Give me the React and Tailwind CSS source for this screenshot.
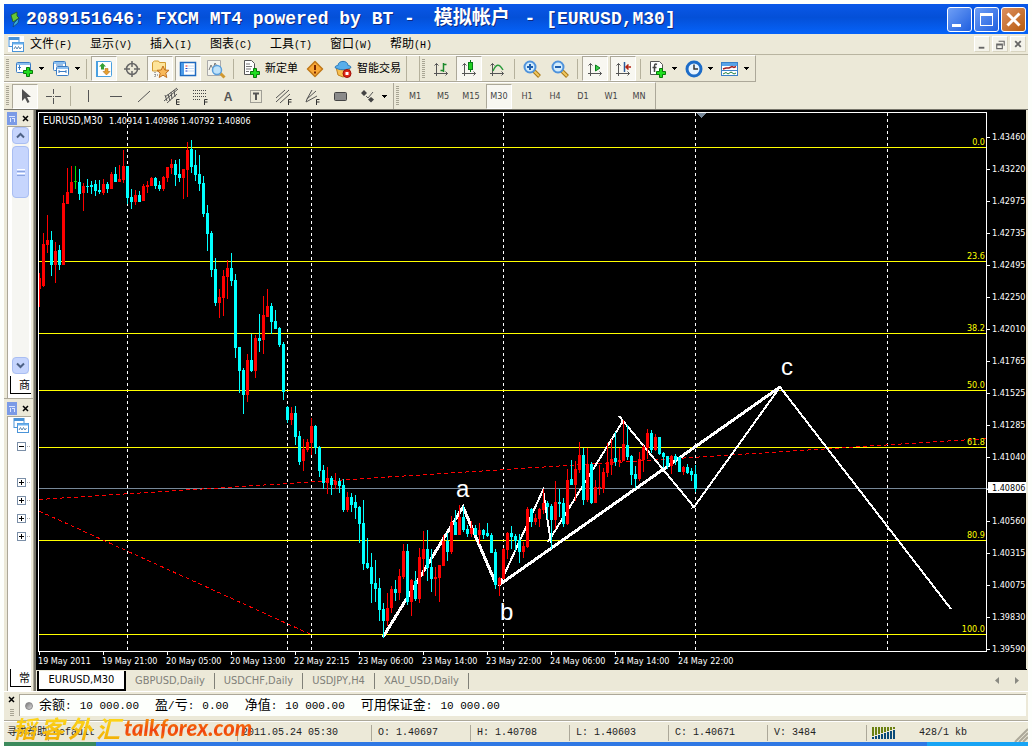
import React from "react";

/* ---------- chart data: [high, top, bottom, low, colour] per bar ---------- */
const BARS = [
  [273,278,289,307,"r"],[233,244,286,287,"r"],[215,240,245,253,"r"],[231,240,265,276,"c"],[242,251,265,283,"r"],
  [245,250,265,270,"c"],[195,203,265,265,"r"],[168,192,204,204,"r"],[166,182,193,193,"r"],[166,181,182,189,"g"],
  [169,182,194,200,"c"],[183,186,193,211,"r"],[179,186,187,193,"c"],[181,185,187,194,"c"],[180,184,191,196,"c"],
  [180,190,192,194,"c"],[179,184,193,195,"r"],[182,184,189,193,"c"],[172,174,189,189,"r"],[167,174,182,182,"c"],
  [165,179,182,182,"r"],[150,166,180,183,"r"],[166,166,198,204,"c"],[189,197,202,209,"c"],[190,195,202,205,"r"],
  [191,195,202,202,"c"],[184,186,201,201,"r"],[181,185,187,193,"r"],[177,178,186,186,"r"],[177,178,186,189,"c"],
  [181,185,189,191,"c"],[176,177,189,191,"r"],[167,167,178,182,"r"],[159,164,168,174,"r"],[160,164,175,186,"c"],
  [159,174,178,182,"c"],[169,169,178,199,"r"],[142,150,170,197,"r"],[140,149,167,173,"c"],[150,165,175,181,"c"],
  [155,174,184,191,"c"],[176,183,214,217,"c"],[205,213,234,251,"c"],[231,233,270,277,"c"],[258,269,303,306,"c"],
  [289,297,303,318,"r"],[270,276,298,316,"r"],[260,268,277,299,"r"],[253,268,281,286,"c"],[274,280,348,358,"c"],
  [347,347,371,393,"c"],[368,370,395,414,"c"],[354,360,395,402,"r"],[334,360,371,372,"c"],[335,338,371,378,"r"],
  [314,338,341,352,"c"],[296,315,340,354,"r"],[289,306,317,317,"r"],[303,306,322,334,"c"],[310,321,329,329,"c"],
  [327,328,345,347,"c"],[342,344,392,400,"c"],[406,407,420,423,"c"],[407,413,420,425,"r"],[406,413,437,445,"c"],
  [431,436,462,465,"c"],[439,449,461,471,"r"],[439,442,450,452,"r"],[418,426,443,455,"r"],[425,426,448,454,"c"],
  [446,447,471,477,"c"],[465,470,483,489,"c"],[467,478,483,494,"r"],[476,478,485,495,"c"],[473,481,485,489,"r"],
  [478,481,486,493,"c"],[479,485,510,512,"c"],[492,497,510,512,"r"],[493,497,505,512,"c"],[495,502,508,519,"c"],
  [506,507,524,543,"c"],[500,523,564,570,"c"],[538,563,568,569,"c"],[553,567,584,603,"c"],[560,583,589,602,"c"],
  [578,588,610,621,"c"],[603,609,621,638,"c"],[593,608,621,626,"r"],[586,589,608,613,"r"],[580,589,593,601,"c"],
  [569,576,593,600,"r"],[544,551,577,579,"r"],[544,551,602,605,"c"],[579,580,602,616,"r"],[571,581,599,601,"c"],
  [548,557,599,603,"r"],[531,549,559,576,"r"],[530,549,568,581,"c"],[549,567,579,592,"c"],[567,577,579,596,"r"],
  [565,565,578,602,"r"],[535,541,566,566,"r"],[533,541,552,561,"c"],[516,522,552,554,"r"],[510,522,535,535,"c"],
  [505,517,535,535,"r"],[506,517,530,532,"c"],[525,529,534,537,"c"],[521,528,534,537,"r"],[525,528,535,535,"c"],
  [523,530,535,544,"r"],[529,530,535,539,"c"],[523,533,536,537,"c"],[533,535,553,553,"c"],[549,552,585,589,"c"],
  [577,578,585,596,"r"],[548,549,579,579,"r"],[532,533,550,559,"r"],[526,533,537,549,"c"],[534,536,541,551,"c"],
  [534,540,552,563,"c"],[542,546,552,558,"r"],[507,509,547,548,"r"],[508,509,522,527,"c"],[514,518,522,525,"r"],
  [508,509,519,527,"r"],[489,503,510,514,"r"],[501,503,507,519,"c"],[504,506,520,549,"c"],[481,502,520,529,"r"],
  [489,502,504,517,"c"],[498,503,524,527,"c"],[469,480,524,525,"r"],[460,479,485,485,"c"],[461,469,485,501,"r"],
  [442,455,470,473,"r"],[448,455,500,505,"c"],[448,464,500,502,"r"],[462,464,503,504,"c"],[480,487,503,503,"r"],
  [465,487,488,495,"r"],[468,472,489,493,"r"],[443,463,473,477,"r"],[439,459,465,475,"r"],[432,458,462,466,"c"],
  [448,460,462,467,"r"],[420,444,461,461,"r"],[425,445,457,460,"c"],[455,456,475,485,"c"],[466,474,479,488,"c"],
  [452,459,479,481,"r"],[445,447,460,472,"r"],[429,433,448,459,"r"],[430,433,450,453,"c"],[434,437,450,451,"r"],
  [437,437,454,455,"c"],[452,453,457,468,"c"],[456,456,466,469,"c"],[455,456,466,474,"r"],[454,456,460,465,"c"],
  [457,457,472,472,"c"],[466,467,472,475,"r"],[464,467,473,474,"c"],[468,471,475,481,"c"],[465,474,489,492,"c"],
];
const INK = { r: "#ff0000", c: "#00ffff", g: "#00e000" };

const PRICES = ["1.43460","1.43220","1.42975","1.42735","1.42495","1.42250","1.42010","1.41765","1.41525","1.41285","1.41040",null,"1.40560","1.40315","1.40075","1.39830","1.39590"];
const TIMES = ["19 May 2011","19 May 21:00","20 May 05:00","20 May 13:00","22 May 22:15","23 May 06:00","23 May 14:00","23 May 22:00","24 May 06:00","24 May 14:00","24 May 22:00"];
const LEVELS = [["0.0",147],["23.6",261],["38.2",333],["50.0",390],["61.8",447],["80.9",540],["100.0",634]];
const SESSIONS = [127, 287, 311, 503, 695, 887];

function Chart() {
  return (
    <svg viewBox="36 110 991 559" className="block h-auto w-full bg-black font-['DejaVu_Sans_Condensed','DejaVu_Sans',sans-serif] text-[9px]" role="img" aria-label="EURUSD,M30">
      <g shapeRendering="crispEdges">
        {SESSIONS.map((x) => (
          <line key={x} x1={x + 0.5} x2={x + 0.5} y1="113" y2="651" stroke="#fff" strokeDasharray="3 3" />
        ))}
        {LEVELS.map(([n, y]) => <rect key={n} x="39" y={y} width="947" height="1" fill="#ffff00" />)}
        <rect x="39" y="488" width="949" height="1" fill="#778899" />
        <path d="M39 499.5 987 438.500M39 511 310 634" stroke="#ff0000" strokeDasharray="4 3" fill="none" />
      </g>
      <g fill="none" stroke="#fff" shapeRendering="crispEdges">
        <path d="M383 637 463 507 496 584M499 585 780 387" strokeWidth="3" />
        <path d="M499 586 543 490 551 543M548 542 623 421M619 416 694 507 780 387 951 609" strokeWidth="2" />
        <path d="M691 504l5 5M691 509l5-5" />
      </g>
      <g shapeRendering="crispEdges">
        {BARS.map(([h, t, b, l, k], i) => {
          const x = 39 + 4 * i;
          return (
            <g key={i} fill={INK[k]}>
              <rect x={x} y={h} width="1" height={Math.max(1, l - h)} />
              <rect x={i ? x - 1 : x} y={t} width={i ? 3 : 2} height={Math.max(1, b - t)} />
            </g>
          );
        })}
        <path d="M38.500 112.500H986.500V651.500H38.500Z" fill="none" stroke="#fff" />
        {TIMES.map((t, i) => <rect key={t} x={39 + 64 * i} y="652" width="1" height="3" fill="#fff" />)}
        {PRICES.map((p, i) => <rect key={i} x="987" y={137 + 32 * i} width="3" height="1" fill="#fff" />)}
        <path d="M696 113h10l-5 5z" fill="#778899" />
        <rect x="988" y="482" width="38" height="11" fill="#fff" />
        <rect x="1026" y="110" width="1" height="559" fill="#ece9d8" />
      </g>
      <g fill="#fff">
        <text x="43" y="124" fontSize="10">EURUSD,M30</text>
        <text x="109" y="124">1.40914 1.40986 1.40792 1.40806</text>
        {TIMES.map((t, i) => <text key={t} x={38 + 64 * i} y="664">{t}</text>)}
        {PRICES.map((p, i) => p && <text key={p} x="992" y={140 + 32 * i}>{p}</text>)}
      </g>
      <text x="992" y="491" fill="#000">1.40806</text>
      <g fill="#ffff00" textAnchor="end">
        {LEVELS.map(([n, y]) => <text key={n} x="985" y={y - 2}>{n}</text>)}
      </g>
      <g fill="#fff" className="font-['Liberation_Sans',sans-serif] text-[24px]">
        <text x="456" y="497">a</text>
        <text x="500" y="620">b</text>
        <text x="781" y="375">c</text>
      </g>
    </svg>
  );
}

/* ------------------------------- icons ------------------------------- */
const I = ({ children, w = 20, h = 20 }) => (
  <svg width={w} height={h} viewBox={`0 0 ${w} ${h}`} fill="none" aria-hidden="true" className="shrink-0">{children}</svg>
);
const Plus = ({ x, y }) => (
  <path d={`M${x + 3.5} ${y + 0.5}h3v3h3v3h-3v3h-3v-3h-3v-3h3z`} fill="#1fdd1f" stroke="#087a08" />
);
const Win = ({ x, y, w = 13, h = 10 }) => (
  <>
    <rect x={x + 0.5} y={y + 0.5} width={w} height={h} rx="1" fill="#fff" stroke="#3a7cc4" />
    <rect x={x + 1} y={y + 1} width={w - 1} height="2" fill="#8cc0f0" />
  </>
);
const Axes = () => <path d="M5.500 17V4.500M3.500 6.500l2-2 2 2M3 14.500h13.500M14.500 12.500l2 2-2 2" stroke="#555" />;
const Lens = ({ plus }) => (
  <I>
    <path d="M12 12l5.500 5.500" stroke="#a87818" strokeWidth="4" />
    <path d="M12 12l5 5" stroke="#f0c860" strokeWidth="2" />
    <circle cx="8" cy="8" r="5.500" fill="#d4edfc" stroke="#4f93dc" strokeWidth="2" />
    <path d={plus ? "M5 8h6M8 5v6" : "M5 8h6"} stroke="#1e5fae" strokeWidth="2" />
  </I>
);
const ic = {
  newChart: <I><Win x={1} y={3} w={14} h={10} /><path d="M4.500 6v5M3 8.500h3" stroke="#3a7cc4" /><Plus x={8} y={8} /></I>,
  profiles: <I><Win x={2} y={2} w={12} h={9} /><Win x={5} y={7} w={12} h={9} /><path d="M5 6h7M8 12.500h7M8 11v3M15 11v3" stroke="#3a7cc4" /></I>,
  market: <I><rect x="2.500" y="2.500" width="15" height="15" rx="1" fill="#fff" stroke="#4aa0e0" /><rect x="2" y="2" width="2" height="16" fill="#4aa0e0" /><path d="M8.500 4l3.500 3.500h-2v3H7v-3H5z" fill="#35a035" /><path d="M12.500 16L9 12.500h2v-3h3v3h2z" fill="#e8a030" stroke="#a86810" strokeWidth=".5" /></I>,
  target: <I><circle cx="10" cy="10" r="5.500" stroke="#666" strokeWidth="1.500" /><path d="M10 2v6M10 12v6M2 10h6M12 10h6" stroke="#666" strokeWidth="1.500" /></I>,
  nav: <I><path d="M2.500 12V3.500l2-1.500h4l1 1.500h6V12z" fill="#fde49a" stroke="#d09a30" /><path d="M5 13v5M5 16h4" stroke="#666" strokeDasharray="1 1" /><path d="M13 7l1.800 4 4.200.300-3.200 2.800 1 4.400L13 16.200l-3.800 2.300 1-4.400L7 11.300l4.200-.300z" fill="#f8b858" stroke="#c07020" /></I>,
  terminal: <I><rect x="2.500" y="3.500" width="15" height="13" fill="#fff" stroke="#1e6ac0" strokeWidth="1.500" /><rect x="3" y="4" width="3" height="12" fill="#4a9ae8" /><path d="M7.500 7h2" stroke="#e02020" /><path d="M7.500 9.500h2M7.500 12h2" stroke="#2040c0" /><path d="M10 7h6M10 9.500h6M10 12h6" stroke="#c4dcf4" /></I>,
  tester: <I><path d="M1.500 1.500h13v15h-13z" fill="#f4f4ee" stroke="#aaa" /><path d="M3 11l2-5 2 4 2-6 3 5" stroke="#777" /><path d="M14 14l4.500 4.500" stroke="#d09830" strokeWidth="3" /><circle cx="11" cy="11" r="4.500" fill="#bfe2fa" stroke="#5a9fdc" strokeWidth="1.500" /></I>,
  order: <I><path d="M3.500 1.500h7l3 3v11h-10z" fill="#fff" stroke="#555" /><path d="M5 5h4M5 7.500h6M5 10h5M5 12.500h3" stroke="#777" /><Plus x={9} y={9} /></I>,
  alert: <I><path d="M10 2.500l7.500 7.500-7.500 7.500L2.500 10z" fill="#f8a838" stroke="#c07818" strokeWidth="1.500" strokeLinejoin="round" /><path d="M10 6v5M10 12.500v2" stroke="#7a2800" strokeWidth="2" /></I>,
  expert: <I><path d="M3 8l7-3 7 3-2 8-5 2-5-2z" fill="#f8c050" stroke="#c08020" /><path d="M2 8.500c0-2 3-2 3-2C5 1 15 1 15 6.500c0 0 3 0 3 2-4 3-12 3-16 0z" fill="#58aeea" stroke="#2a78b8" /><circle cx="14" cy="14.500" r="4" fill="#e02818" stroke="#a01008" /><rect x="12.500" y="13" width="3" height="3" fill="#fff" /></I>,
  bars: <I><Axes /><path d="M12.500 4v9M12.500 5.500h3M9.500 11.500h3" stroke="#1a8a2a" strokeWidth="1.500" /></I>,
  candles: <I><Axes /><path d="M11.500 1v12" stroke="#087a18" /><rect x="9.500" y="3.500" width="4" height="7" fill="#20d020" stroke="#087a18" /></I>,
  line: <I><Axes /><path d="M6 12c3-7 6-8 10-1" stroke="#2a9a3a" strokeWidth="1.500" /></I>,
  scroll: <I><Axes /><path d="M10.500 6v6l4.500-3z" fill="#38d048" stroke="#0a7a1a" /></I>,
  shift: <I><Axes /><path d="M11.500 3v10" stroke="#2a5a9a" strokeWidth="1.500" /><path d="M18 8h-5M15.500 5.500L13 8l2.500 2.500" stroke="#b02010" strokeWidth="1.500" /></I>,
  indicator: <I><path d="M2.500 2.500h9l3 3v10h-12z" fill="#fff" stroke="#555" /><path d="M9 5.500c-2-1-2.500 0-2.500 2V13M4.500 8.500h4" stroke="#444" strokeWidth="1.500" /><Plus x={8} y={9} /></I>,
  clock: <I><circle cx="10" cy="10" r="7" fill="#e8f4ff" stroke="#1c6cc8" strokeWidth="3" /><path d="M10 5.500V10h4" stroke="#333" strokeWidth="1.500" /></I>,
  template: <I><rect x="1.500" y="3.500" width="16" height="13" fill="#fff" stroke="#3a80c8" /><rect x="2" y="4" width="15" height="3" fill="#58a4e8" /><path d="M3 10l3-1 3 0 3-1.500 2 1 2-1" stroke="#a02020" strokeWidth="1.500" /><path d="M2 11.500h15" stroke="#3a80c8" /><path d="M3 15l3-1.500 2 1.500 3-2 3 2 2-1" stroke="#208040" /></I>,
  cursor: <I><path d="M7 3v12l3-3 2.500 5 2-1-2.500-5h4z" fill="#505050" /></I>,
  cross: <I><path d="M10.500 3v5M10.500 12v6M3 10.500h6M12 10.500h6M10 10.500h1" stroke="#555" /></I>,
  vline: <I><path d="M10.500 4v12" stroke="#555" /></I>,
  hline: <I><path d="M4 10.500h12" stroke="#555" /></I>,
  trend: <I><path d="M4 16L16 5" stroke="#555" /></I>,
  fibChannel: <I><path d="M2 15L16 3M3 11l12-9M5 17l10-9M6 8l2 7M9 6l1 7M12 4l1 7M3 9l2 6" stroke="#555" /><path d="M17.500 13.500h-3v5h3M14.500 16h3" stroke="#333" /></I>,
  fibRetr: <I><path d="M3 4.500h13M3 7.500h13M3 10.500h13M3 13.500h8" stroke="#444" strokeDasharray="1 1" /><path d="M17.500 13.500h-3V19M14.500 16h3" stroke="#333" /></I>,
  label: <I><rect x="4.500" y="4.500" width="11" height="12" stroke="#555" strokeDasharray="1 1" /><path d="M7 7.500h6M10 7.500V14" stroke="#555" strokeWidth="2" /></I>,
  channel: <I><path d="M2 12l9-8M2 16L15 4M6 17l10-9" stroke="#555" /><path d="M17.500 13.500h-3V19M14.500 16h3" stroke="#333" /></I>,
  fan: <I><path d="M4 16l1-3 5-9M5 13l9-8M4 16l11-6" stroke="#555" /><path d="M17.500 13.500h-3V19M14.500 16h3" stroke="#333" /></I>,
  rect: <I><rect x="4.500" y="6.500" width="12" height="8" rx="1" fill="#8a8a8a" stroke="#444" /></I>,
  shapes: <I><path d="M6 4l3 3-3 3-3-3zM13 11l3 2.500-3 3-3-3z" fill="#444" /><path d="M8 10l2 2 5-6" stroke="#555" /></I>,
};

const Arrow = () => (
  <svg width="5" height="3" viewBox="0 0 5 3" shapeRendering="crispEdges" aria-hidden="true"><path d="M0 0h5L2.500 3z" fill="#000" /></svg>
);
const Grip = () => (
  <span className="flex w-[7px] shrink-0 justify-center"><span className="h-5 w-[3px] bg-[repeating-linear-gradient(to_bottom,#a8a594_0_1px,transparent_1px_2px)]" /></span>
);
const Sep = () => (
  <span className="flex w-[7px] shrink-0 justify-center"><span className="h-5 w-px bg-[#b5b19c]" /></span>
);
const PRESSED = "mx-px w-[26px] border border-[#aca899] border-r-white border-b-white bg-[#f8f7f1]";

function Tool({ icon, name, pressed, menu, text }) {
  if (menu)
    return (
      <button aria-label={name} className="flex h-[25px] w-9 shrink-0 items-center">
        <span className="flex w-7 justify-center">{ic[icon]}</span><Arrow />
      </button>
    );
  if (text)
    return (
      <button className="flex h-[25px] shrink-0 items-center gap-1 pl-1 text-[11px] whitespace-nowrap">
        {ic[icon]}<span>{text}</span>
      </button>
    );
  return (
    <button aria-label={name} className={`flex h-[25px] shrink-0 items-center justify-center ${pressed ? PRESSED : "w-7"}`}>{ic[icon]}</button>
  );
}

const MENUS = [["文件","F"],["显示","V"],["插入","I"],["图表","C"],["工具","T"],["窗口","W"],["帮助","H"]];
const FRAMES = ["M1","M5","M15","M30","H1","H4","D1","W1","MN"];
const TABS = ["GBPUSD,Daily","USDCHF,Daily","USDJPY,H4","XAU_USD,Daily"];
const FUNDS = [["余额:","10 000.00"],["盈/亏:","0.00"],["净值:","10 000.00"],["可用保证金:","10 000.00"]];
const QUOTES = ["O: 1.40697","H: 1.40708","L: 1.40603","C: 1.40671","V: 3484"];

const Close = ({ name }) => (
  <button aria-label={name} className="flex h-3 w-3 items-center justify-center">
    <svg width="7" height="7" viewBox="0 0 7 7" aria-hidden="true"><path d="M1 1l5 5M6 1L1 6" stroke="#000" strokeWidth="1.500" /></svg>
  </button>
);
const PanelHead = ({ name }) => (
  <div className="flex h-4 shrink-0 items-center gap-0.5 pl-[3px]">
    <span className="flex h-[13px] w-[10px] items-center justify-center bg-[#7b9be6]">
      <svg width="8" height="9" viewBox="0 0 8 9" aria-hidden="true"><path d="M1 2.500h6M2.500 4v4M6.500 4v4M4 4.500h2" stroke="#dbe6ff" /></svg>
    </span>
    <Close name={name} />
  </div>
);
const SideTab = ({ children }) => (
  <div className="flex h-6 shrink-0 items-end pb-1 pl-0.5">
    <button className="h-[18px] w-full border-b border-l border-black bg-white pl-2 text-left text-[11px] leading-4 whitespace-nowrap">{children}</button>
  </div>
);
const ScrollBtn = ({ up }) => (
  <button aria-label={up ? "Scroll up" : "Scroll down"} className="flex h-[17px] w-[17px] items-center justify-center rounded-sm border border-[#a9bef2] bg-[#c6d5fd]">
    <svg width="9" height="7" viewBox="0 0 9 7" fill="none" aria-hidden="true"><path d={up ? "M1 5.500l3.500-3.500L8 5.500" : "M1 1.500L4.500 5 8 1.500"} stroke="#4d6185" strokeWidth="2" /></svg>
  </button>
);
const Node = ({ open }) => (
  <svg width="14" height="9" viewBox="0 0 14 9" shapeRendering="crispEdges" aria-hidden="true">
    <rect x=".5" y=".5" width="8" height="8" fill="#fff" stroke="#7b8fa8" />
    <path d={open ? "M2 4.500h5" : "M2 4.500h5M4.500 2v5"} stroke="#000" />
    <path d="M10 4.500h4" stroke="#aaa" strokeDasharray="1 1" />
  </svg>
);
const ChartsIcon = () => (
  <svg width="16" height="15" viewBox="0 0 16 15" fill="none" aria-hidden="true">
    <rect x="1" y=".5" width="10" height="9" fill="#fff" stroke="#4a94d8" /><path d="M1 2h10" stroke="#4a94d8" strokeWidth="2" />
    <rect x="4.500" y="5.500" width="11" height="9" fill="#fff" stroke="#4a94d8" /><path d="M4.500 6.500h11" stroke="#6ab0ec" strokeWidth="2" />
    <path d="M6 12l1.500-2.500L9 12l1.500-2.500L12 12l1.500-2" stroke="#5a88b0" />
  </svg>
);

export default function App() {
  return (
    <div className="flex min-h-screen flex-col overflow-x-hidden bg-[#fdfffc] px-1 pt-1 font-['Liberation_Sans','Noto_Sans_CJK_SC',sans-serif] text-black">
      {/* title bar */}
      <header className="flex h-[30px] shrink-0 items-center bg-[linear-gradient(#0a58e8,#0450d8_45%,#0563fa)] pr-0.5 pl-1">
        <svg width="14" height="20" viewBox="0 0 14 20" aria-hidden="true" className="mr-1 shrink-0"><path d="M3 6l6-3v4l2 2-6 4z" fill="#68c838" stroke="#205a20" strokeWidth=".8" /><path d="M11 9l-1 5-5 4 1-4z" fill="#38a8d8" stroke="#104878" strokeWidth=".8" /></svg>
        <h1 className="flex flex-1 items-center overflow-hidden font-['Liberation_Mono','Noto_Sans_CJK_SC',monospace] text-[18px] leading-7 font-bold whitespace-pre text-white [text-shadow:1px_1px_0_#102a80]">
          <span>2089151646: FXCM MT4 powered by BT - </span><span className="mr-1 ml-2 text-[19px]">模拟帐户</span><span> - [EURUSD,M30]</span>
        </h1>
        <div className="flex gap-0.5">
          <button aria-label="Minimize" className="flex h-[25px] w-[25px] items-end rounded-[3px] border border-white bg-[linear-gradient(135deg,#6f9ff5,#1f5fe0)] p-1"><span className="h-[3px] w-[9px] bg-white" /></button>
          <button aria-label="Restore" className="flex h-[25px] w-[25px] items-center justify-center rounded-[3px] border border-white bg-[linear-gradient(135deg,#6f9ff5,#1f5fe0)]"><span className="h-[13px] w-[13px] border border-t-[3px] border-white" /></button>
          <button aria-label="Close" className="flex h-[25px] w-[25px] items-center justify-center rounded-[3px] border border-white bg-[linear-gradient(135deg,#dc9060,#b85c10)]"><svg width="15" height="15" viewBox="0 0 15 15" aria-hidden="true"><path d="M1.500 1.500l12 12M13.500 1.500l-12 12" stroke="#fff" strokeWidth="3" /></svg></button>
        </div>
      </header>

      {/* menu bar */}
      <nav className="flex h-[21px] shrink-0 items-center border-b border-[#b8b4a0] bg-[#ece9d8] pr-0.5 pl-1">
        <span className="mr-1.5 flex h-4 w-4 items-center bg-white"><ChartsIcon /></span>
        <div className="flex flex-1 pt-0.5">
          {MENUS.map(([t, k]) => (
            <button key={t} className="w-[60px] text-left text-[12px] leading-4 whitespace-nowrap">
              {t}<span className="font-['Liberation_Mono',monospace] text-[10px]">({k})</span>
            </button>
          ))}
        </div>
        <div className="flex gap-0.5">
          {["M4 11.500h6", "M6 4.500h6v5M4 7.500h6v5H4zM4 8.500h6", "M4.500 4.500l6 6M10.500 4.500l-6 6"].map((d, i) => (
            <button key={d} aria-label={["Minimize chart", "Restore chart", "Close chart"][i]} className="h-4 w-4 border border-r-[#d8d4c0] border-b-[#d8d4c0] border-l-white border-t-white bg-[#f4f3ea]">
              <svg width="14" height="14" viewBox="0 0 15 15" fill="none" aria-hidden="true"><path d={d} stroke="#666" strokeWidth={i === 1 ? 1.2 : 2} /></svg>
            </button>
          ))}
        </div>
      </nav>

      {/* toolbars */}
      <div className="shrink-0 bg-[#ece9d8]">
        <div className="flex h-[27px] w-[752px] max-w-full items-center overflow-hidden border-t border-r border-b border-t-white border-r-[#aca899] border-b-[#aca899]">
          <Grip />
          <Tool icon="newChart" name="New chart" menu /><Tool icon="profiles" name="Profiles" menu />
          <Sep />
          <Tool icon="market" name="Market watch" pressed /><Tool icon="target" name="Data window" /><Tool icon="nav" name="Navigator" pressed /><Tool icon="terminal" name="Terminal" pressed /><Tool icon="tester" name="Strategy tester" />
          <Sep />
          <div className="w-[64px] shrink-0"><Tool icon="order" text="新定单" /></div>
          <Tool icon="alert" name="MetaEditor" />
          <div className="w-[77px] shrink-0"><Tool icon="expert" text="智能交易" /></div>
          <span className="h-full w-[14px] shrink-0 border-x border-[#b5b19c]" />
          <Grip />
          <Tool icon="bars" name="Bar chart" /><Tool icon="candles" name="Candlesticks" pressed /><Tool icon="line" name="Line chart" />
          <Sep />
          <button aria-label="Zoom in" className="flex h-[25px] w-7 shrink-0 items-center justify-center"><Lens plus /></button>
          <button aria-label="Zoom out" className="flex h-[25px] w-7 shrink-0 items-center justify-center"><Lens /></button>
          <Sep />
          <Tool icon="scroll" name="Auto scroll" pressed /><Tool icon="shift" name="Chart shift" pressed />
          <Sep />
          <Tool icon="indicator" name="Indicators" menu /><Tool icon="clock" name="Periods" menu /><Tool icon="template" name="Templates" menu />
        </div>
        <div className="flex h-[27px] w-[652px] max-w-full items-center overflow-hidden border-t border-r border-t-white border-r-[#aca899]">
          <Grip />
          <Tool icon="cursor" name="Cursor" pressed /><Tool icon="cross" name="Crosshair" />
          <Sep />
          <Tool icon="vline" name="Vertical line" /><Tool icon="hline" name="Horizontal line" /><Tool icon="trend" name="Trendline" /><Tool icon="fibChannel" name="Equidistant channel" /><Tool icon="fibRetr" name="Fibonacci retracement" />
          <button className="h-[25px] w-7 shrink-0 pt-0.5 text-[12px] font-bold text-[#555]">A</button>
          <Tool icon="label" name="Text label" /><Tool icon="channel" name="Fibonacci channel" /><Tool icon="fan" name="Fibonacci fan" /><Tool icon="rect" name="Rectangle" /><Tool icon="shapes" name="Shapes" menu />
          <span className="h-full w-1 shrink-0 border-r border-[#aca899]" />
          <Grip />
          {FRAMES.map((f) => (
            <button key={f} className={`h-[25px] shrink-0 pt-0.5 text-center font-['DejaVu_Sans_Condensed','DejaVu_Sans',sans-serif] text-[9px] text-[#444] ${f === "M30" ? PRESSED : "w-7"}`}>{f}</button>
          ))}
        </div>
      </div>

      {/* side panels and chart */}
      <main className="flex border-t border-[#77756a] bg-[#ece9d8] pr-px">
        <div className="flex w-8 shrink-0 flex-col border-r-2 border-[#77756a]">
          <section className="flex h-[289px] flex-col border-r border-b border-[#aca899] bg-[#ece9d8]">
            <PanelHead name="Close market watch" />
            <div className="mr-0.5 ml-[3px] flex min-h-0 flex-1 flex-col border-t border-l border-[#aca899] bg-white">
              <div className="flex min-h-0 flex-1 pl-1">
                <div className="flex w-[17px] flex-col bg-[#f6f6f2]">
                  <ScrollBtn up />
                  <div className="mt-0.5 flex h-[52px] flex-col items-center justify-center gap-px rounded-sm border border-[#a9bef2] bg-[#c6d5fd]">
                    <i className="h-px w-2 bg-white" /><i className="h-px w-2 bg-[#8ba4e0]" /><i className="h-px w-2 bg-white" /><i className="h-px w-2 bg-[#8ba4e0]" />
                  </div>
                  <div className="mt-auto"><ScrollBtn /></div>
                </div>
              </div>
              <SideTab>商</SideTab>
            </div>
          </section>
          <section className="flex flex-1 flex-col border-r border-[#aca899] pt-px">
            <PanelHead name="Close navigator" />
            <div className="mr-0.5 ml-[3px] flex flex-1 flex-col border-t border-l border-[#aca899] bg-white">
              <div className="flex flex-1 flex-col items-start gap-[9px] pl-[9px]">
                <div className="-ml-1 pt-px"><ChartsIcon /></div>
                <div className="mb-[18px]"><Node open /></div>
                <Node /><Node /><Node /><Node />
              </div>
              <SideTab>常</SideTab>
            </div>
          </section>
        </div>
        <div className="min-w-0 flex-1">
          <Chart />
          <div className="flex h-[22px] items-center overflow-hidden border-t border-black pl-px font-['DejaVu_Sans_Condensed','DejaVu_Sans',sans-serif] text-[11px] text-[#808078]">
            <button className="h-5 w-[89px] shrink-0 border-r-2 border-b-2 border-l-2 border-black bg-white pt-px leading-4 text-black">EURUSD,M30</button>
            {TABS.map((t) => (
              <button key={t} className="h-4 shrink-0 border-r border-[#808078] px-[9px] text-[10px] leading-4 first-of-type:pl-0"><span className="text-[11px]">{t}</span></button>
            ))}
            <div className="ml-auto flex gap-2 pr-1">
              <button aria-label="Previous tabs" className="px-1"><svg width="4" height="7" viewBox="0 0 4 7" aria-hidden="true"><path d="M4 0v7L0 3.500z" fill="#8a8a82" /></svg></button>
              <button aria-label="Next tabs" className="px-1"><svg width="4" height="7" viewBox="0 0 4 7" aria-hidden="true"><path d="M0 0v7l4-3.500z" fill="#8a8a82" /></svg></button>
            </div>
          </div>
        </div>
      </main>

      {/* account line */}
      <section className="flex h-[29px] shrink-0 border-t border-white bg-[#ece9d8] pt-0.5 pr-0.5 pb-1">
        <div className="flex w-[15px] shrink-0 flex-col items-center gap-1">
          <Close name="Close terminal" />
          <span className="h-2 w-1 bg-[repeating-linear-gradient(to_bottom,#a8a594_0_1px,transparent_1px_2px)]" />
        </div>
        <div className="flex flex-1 items-center gap-4 overflow-hidden border-t border-l border-[#aca899] bg-[#fdfffc] pl-[5px] font-['Liberation_Mono','Noto_Sans_CJK_SC',monospace] text-[11px] leading-4 whitespace-nowrap">
          <span className="-mr-2.5 h-2 w-2 shrink-0 rounded-full border border-[#888] bg-[linear-gradient(135deg,#777,#ddd)]" />
          {FUNDS.map(([k, v]) => (
            <span key={k} className="flex items-baseline gap-2">
              <span>{k.split("").map((ch, i) => <span key={i} className={/[:/]/.test(ch) ? "" : "text-[13px]"}>{ch}</span>)}</span>
              <span>{v}</span>
            </span>
          ))}
        </div>
      </section>

      {/* status bar */}
      <footer className="flex h-[22px] shrink-0 items-center overflow-hidden border-t border-[#aca899] bg-[#ece9d8] pt-0.5 font-['Liberation_Mono','Noto_Sans_CJK_SC',monospace] text-[10px] leading-4 whitespace-nowrap text-[#222] shadow-[inset_0_1px_0_#fff]">
        <span className="w-11 shrink-0 pl-[3px]">寻求帮助</span>
        <span className="w-[189px] shrink-0 border-l border-[#aca899] pl-1">Default</span>
        <span className="w-[134px] shrink-0 border-l border-[#aca899] pl-1">2011.05.24 05:30</span>
        {QUOTES.map((q) => (
          <span key={q} className="w-[99px] shrink-0 border-l border-[#aca899] pl-1.5">{q}</span>
        ))}
        <span className="flex flex-1 items-center gap-6 border-l border-[#aca899] pl-[5px]">
          <svg width="23" height="12" viewBox="0 0 23 12" shapeRendering="crispEdges" aria-hidden="true">
            {[0, 1, 2, 3, 4, 5, 6, 7].map((i) => (
              <g key={i}><rect x={i * 3} y="0" width="2" height={9 - i} fill="#6a8010" /><rect x={i * 3} y={10 - i} width="2" height={2 + i} fill="#0a4a78" /></g>
            ))}
          </svg>
          <span>428/1 kb</span>
        </span>
        <svg width="14" height="14" viewBox="0 0 14 14" className="self-end" aria-hidden="true"><path d="M1 14L14 1M5 14l9-9M9 14l5-5" stroke="#aca899" strokeWidth="2" /></svg>
      </footer>

      {/* desktop taskbar edge, with the site mark lying over the status bar */}
      <div className="relative flex h-1 shrink-0">
        <div className="w-[92px] bg-[#3c8a5c]" />
        <div className="flex-1 bg-[#2f78e4]" />
        <div className="w-[101px] bg-[#18a4f4]" />
        <div className="absolute bottom-0.5 left-2 flex items-center whitespace-nowrap">
          <span className="flex bg-[linear-gradient(#ffe020,#f0a800)] bg-clip-text font-['Noto_Sans_CJK_SC',sans-serif] text-[24px] leading-8 font-bold text-transparent italic">
            {"韬客外汇".split("").map((c) => <span key={c} className="w-7">{c}</span>)}
          </span>
          <span className="bg-[linear-gradient(#f8b000,#f04010_60%,#f8a800)] bg-clip-text pr-1 font-['Lato','Liberation_Sans',sans-serif] text-[22px] leading-8 font-black text-transparent italic">talkforex.com</span>
        </div>
      </div>
    </div>
  );
}
